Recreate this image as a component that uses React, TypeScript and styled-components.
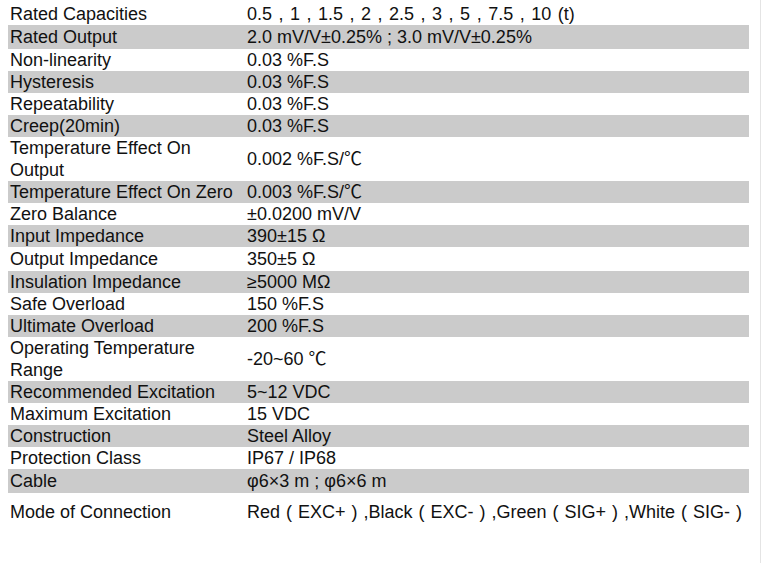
import styled, { createGlobalStyle } from "styled-components";

const GlobalStyle = createGlobalStyle`
  body {
    margin: 0;
    background: #fff;
    font-family: "Liberation Sans", Arial, "Noto Sans CJK SC", sans-serif;
  }
`;

const Page = styled.div`
  width: 761px;
  height: 563px;
  border-right: 1px solid #e4e4e4;
  padding: 3px 0 0 8px;
  box-sizing: border-box;
`;

const Table = styled.table`
  width: 741px;
  border-collapse: collapse;
  font-size: 18px;
  color: #111;
`;

const Row = styled.tr<{ $shade: boolean; $h: number }>`
  height: ${(p) => p.$h}px;
  background: ${(p) => (p.$shade ? "#cbcbcb" : "transparent")};
`;

const Label = styled.td`
  width: 233px;
  padding: 0 2px;
  line-height: 22px;
  vertical-align: middle;
`;

const Value = styled.td<{ $spread: number }>`
  padding: 0 2px;
  line-height: 22px;
  vertical-align: middle;
  white-space: nowrap;
  word-spacing: ${(p) => p.$spread}px;
`;

// label, value, row height, extra word spacing
const specs: [string, string, number, number][] = [
  ["Rated Capacities", "0.5 , 1 , 1.5 , 2 , 2.5 , 3 , 5 , 7.5 , 10 (t)", 22, 1.5],
  ["Rated Output", "2.0 mV/V±0.25% ; 3.0 mV/V±0.25%", 24, 0],
  ["Non-linearity", "0.03 %F.S", 22, 0],
  ["Hysteresis", "0.03 %F.S", 22, 0],
  ["Repeatability", "0.03 %F.S", 22, 0],
  ["Creep(20min)", "0.03 %F.S", 22, 0],
  ["Temperature Effect On Output", "0.002 %F.S/℃", 44, 0],
  ["Temperature Effect On Zero", "0.003 %F.S/℃", 22, 0],
  ["Zero Balance", "±0.0200 mV/V", 22, 0],
  ["Input Impedance", "390±15 Ω", 22, 0],
  ["Output Impedance", "350±5 Ω", 24, 0],
  ["Insulation Impedance", "≥5000 MΩ", 22, 0],
  ["Safe Overload", "150 %F.S", 22, 0],
  ["Ultimate Overload", "200 %F.S", 22, 0],
  ["Operating Temperature Range", "-20~60 ℃", 44, 0],
  ["Recommended Excitation", "5~12 VDC", 22, 0],
  ["Maximum Excitation", "15 VDC", 22, 0],
  ["Construction", "Steel Alloy", 22, 0],
  ["Protection Class", "IP67 / IP68", 22, 0],
  ["Cable", "φ6×3 m ; φ6×6 m", 24, 0],
  ["Mode of Connection", "Red ( EXC+ ) ,Black ( EXC- ) ,Green ( SIG+ ) ,White ( SIG- )", 38, 1],
];

export default function App() {
  return (
    <>
      <GlobalStyle />
      <Page>
        <Table>
          <tbody>
            {specs.map(([label, value, h, spread], i) => (
              <Row key={label} $shade={i % 2 === 1} $h={h}>
                <Label>{label}</Label>
                <Value $spread={spread}>{value}</Value>
              </Row>
            ))}
          </tbody>
        </Table>
      </Page>
    </>
  );
}
